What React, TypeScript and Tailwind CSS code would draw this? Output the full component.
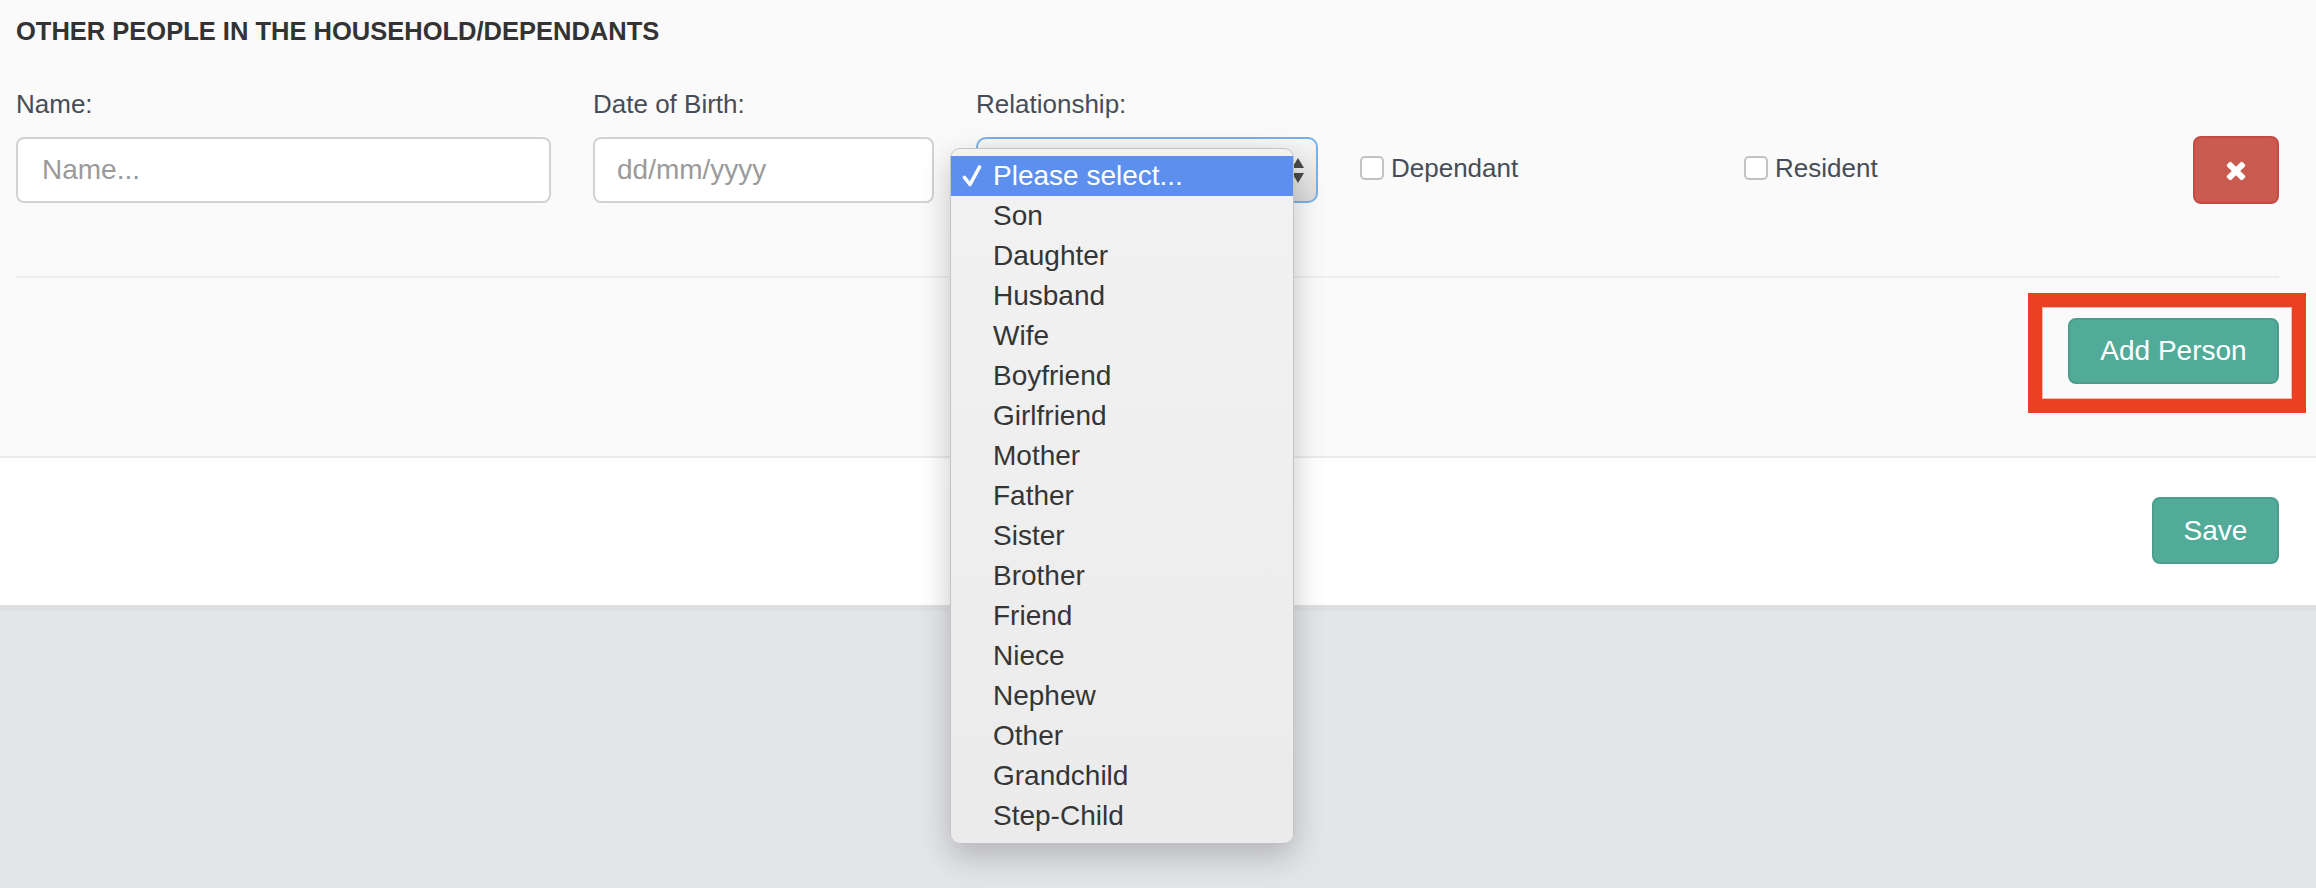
import React from 'react'

const relationships = [
  'Son',
  'Daughter',
  'Husband',
  'Wife',
  'Boyfriend',
  'Girlfriend',
  'Mother',
  'Father',
  'Sister',
  'Brother',
  'Friend',
  'Niece',
  'Nephew',
  'Other',
  'Grandchild',
  'Step-Child',
]

function TimesIcon() {
  return (
    <svg width="22" height="28" viewBox="0 0 1408 1792" fill="#ffffff">
      <path d="M1298 1322q0 40-28 68l-136 136q-28 28-68 28t-68-28l-294-294-294 294q-28 28-68 28t-68-28l-136-136q-28-28-28-68t28-68l294-294-294-294q-28-28-28-68t28-68l136-136q28-28 68-28t68 28l294 294 294-294q28-28 68-28t68 28l136 136q28 28 28 68t-28 68l-294 294 294 294q28 28 28 68z" />
    </svg>
  )
}

function Checkbox({ label }: { label: string }) {
  return (
    <label className="flex h-[36px] items-center gap-[7px] text-[26px] text-[#474d56]">
      <span className="h-[24px] w-[24px] rounded-[5px] border-2 border-[#c2c2c2] bg-white" />
      {label}
    </label>
  )
}

function Field({ label, className, children }: { label: string; className: string; children: React.ReactNode }) {
  return (
    <div className={className}>
      <div className="h-[36px] text-[26px] leading-[36px] text-[#474d56]">{label}</div>
      <div className="mt-[15px]">{children}</div>
    </div>
  )
}

// native select is open, so we paint the macOS popup by hand
function RelationshipMenu() {
  return (
    <div className="absolute left-[950px] top-[148px] w-[344px] rounded-[10px] border border-[#c4c4c4] bg-gradient-to-b from-[#f2f2f2] to-[#ebebeb] py-[7px] shadow-[0_12px_32px_rgba(0,0,0,0.22)]">
      <div className="relative h-[40px] bg-[#5c8fee] pl-[42px] text-[28px] leading-[39px] text-white">
        <svg className="absolute left-[11px] top-[9px]" width="20" height="22" viewBox="0 0 20 22" fill="none">
          <path d="M2.5 12.5 L8 19.5 L17.5 2" stroke="#ffffff" strokeWidth="3.6" strokeLinecap="round" strokeLinejoin="round" />
        </svg>
        Please select...
      </div>
      {relationships.map((r) => (
        <div key={r} className="h-[40px] pl-[42px] text-[28px] leading-[39px] text-[#353535]">
          {r}
        </div>
      ))}
    </div>
  )
}

export default function App() {
  return (
    <div className="relative min-h-screen bg-[#e4e5e9] font-['Liberation_Sans',Arial,sans-serif]">
      <section className="border-b-2 border-[#ebebeb] bg-[#fafafa] pb-[72px] pl-[16px] pr-[37px] pt-[13px]">
        <h3 className="h-[36px] text-[25.5px] font-bold leading-[36px] text-[#333333]">
          OTHER PEOPLE IN THE HOUSEHOLD/DEPENDANTS
        </h3>

        <div className="mt-[37px] flex items-start gap-[42px] border-b-2 border-[#eeeeee] pb-[72px]">
          <Field label="Name:" className="w-[535px]">
            <input
              placeholder="Name..."
              className="h-[66px] w-full rounded-[8px] border-2 border-[#d2d2d2] bg-white pl-[24px] text-[28px] text-[#555] outline-none placeholder:text-[#9a9a9a]"
            />
          </Field>
          <Field label="Date of Birth:" className="w-[341px]">
            <input
              placeholder="dd/mm/yyyy"
              className="h-[66px] w-full rounded-[8px] border-2 border-[#d2d2d2] bg-white pl-[22px] text-[28px] text-[#555] outline-none placeholder:text-[#9a9a9a]"
            />
          </Field>
          <Field label="Relationship:" className="w-[342px]">
            <div className="relative h-[66px] w-full rounded-[10px] border-2 border-[#7ab0e8] bg-gradient-to-b from-[#f7f7f7] to-[#dcdcdc]">
              <svg className="absolute right-[12px] top-[19px]" width="12" height="26" viewBox="0 0 12 26" fill="#4a4a4a">
                <path d="M6 0 L12 10 L0 10 Z" />
                <path d="M0 15 L12 15 L6 25 Z" />
              </svg>
            </div>
          </Field>
          <div className="mt-[64px] w-[342px]">
            <Checkbox label="Dependant" />
          </div>
          <div className="mt-[64px] w-[342px]">
            <Checkbox label="Resident" />
          </div>
          <button className="ml-auto mt-[50px] flex h-[68px] w-[86px] items-center justify-center rounded-[8px] border-2 border-[#c34a42] bg-[#c95b51]">
            <TimesIcon />
          </button>
        </div>

        <div className="flex justify-end pt-[40px]">
          <button className="h-[66px] w-[211px] rounded-[8px] border-2 border-[#4a9e8b] bg-[#52ab98] text-[28px] text-white">
            Add Person
          </button>
        </div>
      </section>

      <section className="flex justify-end border-b-[6px] border-[#dedfe3] bg-white pb-[41px] pr-[37px] pt-[39px]">
        <button className="h-[67px] w-[127px] rounded-[8px] border-2 border-[#4a9e8b] bg-[#52ab98] text-[28px] text-white">
          Save
        </button>
      </section>

      <RelationshipMenu />

      {/* screenshot annotation */}
      <div className="absolute left-[2028px] top-[293px] h-[120px] w-[278px] border-[14px] border-[#ea4125]">
        <div className="absolute inset-0 border border-[#f6b8ad]" />
      </div>
    </div>
  )
}
